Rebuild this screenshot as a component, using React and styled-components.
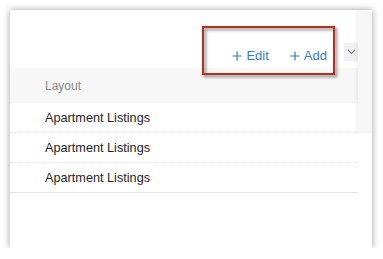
import React from "react";
import styled, { createGlobalStyle } from "styled-components";

const GlobalStyle = createGlobalStyle`
  body {
    margin: 0;
    background: #ffffff;
    font-family: "Liberation Sans", Arial, sans-serif;
  }
`;

const rows = ["Apartment Listings", "Apartment Listings", "Apartment Listings"];

const PlusIcon = () => (
  <svg width="10" height="10" viewBox="0 0 10 10">
    <path d="M5 0.5v9M0.5 5h9" stroke="currentColor" strokeWidth="1.2" fill="none" />
  </svg>
);

const ChevronIcon = () => (
  <svg width="9" height="6" viewBox="0 0 9 6">
    <path d="M1 1l3.5 3.5L8 1" stroke="#7a7a7a" strokeWidth="1.1" fill="none" />
  </svg>
);

const App = () => {
  return (
    <>
      <GlobalStyle />
      <Card>
        <Main>
          <Toolbar>
            <Action gap={21}>
              <PlusIcon />
              <span>Edit</span>
            </Action>
            <Action gap={17}>
              <PlusIcon />
              <span>Add</span>
            </Action>
            <MenuButton>
              <ChevronIcon />
            </MenuButton>
          </Toolbar>
          <HeaderRow>Layout</HeaderRow>
          {rows.map((label, i) => (
            <Row key={i} last={i === rows.length - 1}>
              {label}
            </Row>
          ))}
        </Main>
        <Scrollbar />
        <Highlight />
      </Card>
    </>
  );
};

const Card = styled.div`
  position: relative;
  display: flex;
  align-items: flex-start;
  margin: 10px 0 0 10px;
  width: 362px;
  height: 238px;
  background: #fff;
  box-shadow: 0 0 7px rgba(0, 0, 0, 0.38);
`;

const Main = styled.div`
  flex: 1;
  display: flex;
  flex-direction: column;
`;

const Toolbar = styled.div`
  height: 58px;
  box-sizing: border-box;
  display: flex;
  align-items: flex-end;
  justify-content: flex-end;
  padding-bottom: 4px;
`;

const Action = styled.div`
  display: flex;
  align-items: center;
  gap: 4px;
  margin-right: ${(p) => p.gap}px;
  color: #2d7dd6;
  font-size: 13px;
  line-height: 16px;
`;

const MenuButton = styled.div`
  width: 14px;
  height: 18px;
  margin-bottom: 3px;
  display: flex;
  align-items: center;
  justify-content: center;
  background: #eef0f2;
`;

const HeaderRow = styled.div`
  height: 35px;
  display: flex;
  align-items: center;
  padding-left: 35px;
  background: #f7f7f7;
  color: #888;
  font-size: 12px;
`;

const Row = styled.div`
  height: 30px;
  box-sizing: border-box;
  display: flex;
  align-items: center;
  padding-left: 35px;
  color: #1e1e1e;
  font-size: 12.7px;
  border-bottom: 1px ${(p) => (p.last ? "solid #e4e4e4" : "dotted #e8e8e8")};
`;

const Scrollbar = styled.div`
  width: 14px;
  height: 123px;
  background: #f6f6f6;
  box-shadow: -2px 0 3px rgba(0, 0, 0, 0.05);
`;

const Highlight = styled.div`
  position: absolute;
  left: 192px;
  top: 16px;
  width: 133px;
  height: 49px;
  box-sizing: border-box;
  border: 2px solid #b3311e;
  filter: drop-shadow(2px 2px 1.5px rgba(0, 0, 0, 0.5));
`;

export default App;
